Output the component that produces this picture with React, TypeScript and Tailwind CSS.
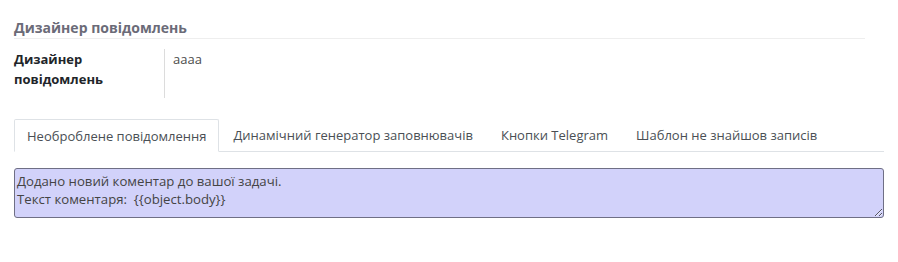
import { useState } from 'react'

const tabs = [
  'Необроблене повідомлення',
  'Динамічний генератор заповнювачів',
  'Кнопки Telegram',
  'Шаблон не знайшов записів',
]

export default function App() {
  const [active, setActive] = useState(0)

  return (
    <div className="min-h-[262px] w-[898px] bg-white font-['Open_Sans',sans-serif] text-[13px] text-[#212529]">
      <div className="pl-[14px] pr-[14px] pt-[18px]">
        {/* ── Section title ───────────────────────────── */}
        <div className="mr-[19px] border-b border-[#eeeeee]">
          <h2 className="text-[14px] font-bold leading-[20px] text-[#6b6b78]">
            Дизайнер повідомлень
          </h2>
        </div>

        <div className="mt-[10px] flex">
          <div className="w-[150px] text-[13px] font-bold leading-[20px] text-[#212529]">
            Дизайнер
            <br />
            повідомлень
          </div>
          <div className="min-h-[49px] border-l border-[#dcdcdc] pl-[8px] leading-[20px] text-[#4c4c4c]">
            aaaa
          </div>
        </div>

        {/* ── Tabs ───────────────────────────────────── */}
        <div className="mt-[21px] flex border-b border-[#dee2e6]">
          {tabs.map((t, i) => (
            <button
              key={t}
              onClick={() => setActive(i)}
              className={
                i === active
                  ? '-mb-px rounded-t-[2px] border border-[#dee2e6] border-b-white bg-white px-[12px] py-[6px] leading-[18px] text-[#4a4f55]'
                  : 'border border-transparent px-[13px] py-[6px] leading-[18px] text-[#4a4f55]'
              }
            >
              {t}
            </button>
          ))}
        </div>

        <div className="mt-[16px]">
          <textarea
            readOnly
            value={'Додано новий коментар до вашої задачі.\nТекст коментаря:  {{object.body}}'}
            className="block h-[50px] w-full rounded-[3px] border border-[#6f6f85] bg-[#d2d2fa] px-[2px] py-[3px] font-['Open_Sans',sans-serif] text-[13.2px] leading-[18px] text-[#444444] outline-none"
          />
        </div>
      </div>
    </div>
  )
}
